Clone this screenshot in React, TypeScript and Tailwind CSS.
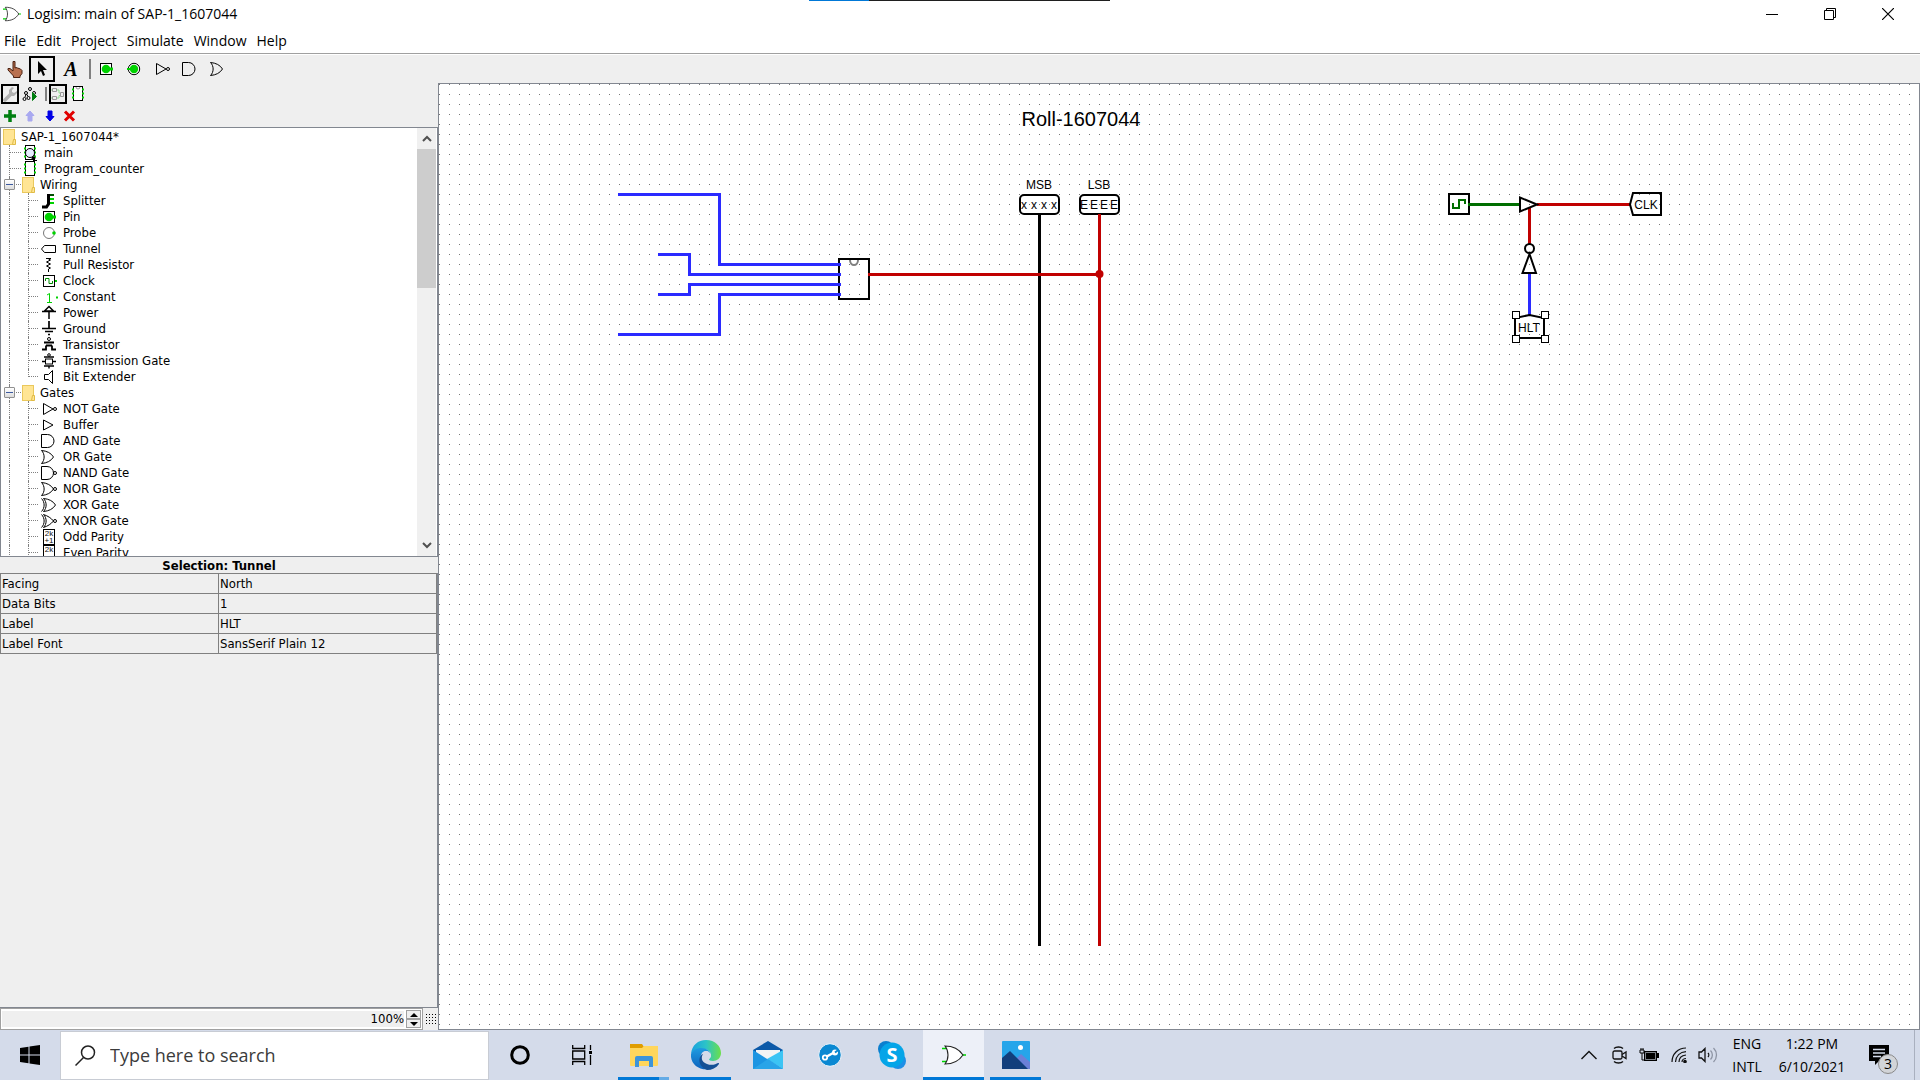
import React from 'react';

const GREEN = '#00d200';
const RED = '#c00000';
const BLUE = '#2a2aff';

function Icon({ children }: { children: React.ReactNode }) {
  return (
    <svg className="h-4 w-4 shrink-0 overflow-visible" viewBox="0 0 16 16" fill="none" stroke="#000" strokeWidth="1" aria-hidden="true">
      {children}
    </svg>
  );
}

function Folder() {
  return (
    <Icon>
      <rect x="0.5" y="0.5" width="11" height="15" fill="#ffe594" stroke="#eac85c" />
      <path d="M10.5 10.5h2v5h-3z" fill="#ffe594" stroke="#e0bb45" />
    </Icon>
  );
}

const chip = (
  <g>
    <rect x="3.5" y="0.5" width="9" height="14" fill="#fff" />
    <path d="M2 3.5h2M2 7.5h2M2 11.5h2M12 3.5h2M12 7.5h2M12 11.5h2" stroke={GREEN} strokeWidth="2" />
  </g>
);
const shield = 'M0.5 1.5C4 5 4 11 0.5 14.5C6 14 10 12 12.5 8C10 4 6 2 0.5 1.5Z';
const parityBox = (
  <g>
    <rect x="2.5" y="0.5" width="11" height="15" />
    <text x="8" y="7" textAnchor="middle" fontSize="8" fontFamily="Liberation Sans" fill="#111" stroke="none">2k</text>
  </g>
);

const glyphs: Record<string, React.ReactNode> = {
  main: (
    <g>
      {chip}
      <path d="M10 12l3 2" strokeWidth="3" />
      <path d="M11 15.5h4" />
      <circle cx="8" cy="8" r="4.5" fill="#e8ecff" />
    </g>
  ),
  circuit: chip,
  Splitter: (
    <g>
      <path d="M7.5 1v10l-2 3H1" strokeWidth="3" />
      <path d="M9 2h4" stroke="#005000" strokeWidth="2" />
      <path d="M9 6h4M9 10h4" stroke={GREEN} strokeWidth="2" />
    </g>
  ),
  Pin: (
    <g>
      <rect x="2.5" y="2.5" width="11" height="11" fill="#fff" />
      <circle cx="8" cy="8" r="4.3" fill={GREEN} stroke="none" />
      <path d="M11 8h4" stroke={GREEN} strokeWidth="3" />
    </g>
  ),
  OutPin: (
    <g>
      <circle cx="8" cy="8" r="5.7" fill="#fff" />
      <circle cx="8" cy="8" r="4.2" fill={GREEN} stroke="none" />
      <path d="M1 8h3" stroke={GREEN} strokeWidth="2" />
    </g>
  ),
  Probe: (
    <g>
      <circle cx="8" cy="8" r="5.5" stroke="#777" />
      <circle cx="13" cy="8" r="1.8" fill={GREEN} stroke="none" />
    </g>
  ),
  Tunnel: <path d="M0.5 8L3.5 4.5H14.5V11.5H3.5Z" />,
  'Pull Resistor': <path d="M5 1.5h5M7.5 1v1l2 1-4 2 4 2-4 2 4 2-2 1v3" />,
  Clock: (
    <g>
      <rect x="2.5" y="2.5" width="11" height="11" />
      <path d="M4.5 8V5.5h3.5V10.5h3.5V8" stroke="#008c00" />
      <path d="M14 8h2" stroke={GREEN} strokeWidth="2" />
    </g>
  ),
  Constant: (
    <g>
      <path d="M6 6l2.5-1.5v9M6 13.5h5" stroke={GREEN} />
      <path d="M15 8.5h2" stroke={GREEN} strokeWidth="2" />
    </g>
  ),
  Power: <path d="M8 1.5L3.5 6h9ZM1 6.5h14M8 6v8" strokeWidth="1.5" />,
  Ground: <path d="M8 0v7M1 7.5h14M4 10.5h8M7 13.5h2" strokeWidth="1.7" />,
  Transistor: (
    <g>
      <circle cx="8" cy="2" r="1.5" />
      <path d="M3 5.5h10M5 8.5h6M1 12.5h4v-4M15 12.5h-4v-4" strokeWidth="1.8" />
    </g>
  ),
  'Transmission Gate': (
    <g>
      <circle cx="8" cy="2" r="1.3" />
      <rect x="4.5" y="6" width="7" height="5" />
      <path d="M3 4h10M3 13h10M1 8.5h3M12 8.5h3M8 13v2.5" strokeWidth="1.4" />
    </g>
  ),
  'Bit Extender': <path d="M3.5 5.5h4l4-4V14.5l-4-4h-4Z" />,
  'NOT Gate': (
    <g>
      <path d="M2.5 2.5L12 8L2.5 13.5Z" />
      <circle cx="14" cy="8" r="1.5" />
    </g>
  ),
  Buffer: <path d="M2.5 3L12 8L2.5 13Z" />,
  'AND Gate': <path d="M0.5 1.5H6.5A6.5 6.5 0 0 1 6.5 14.5H0.5Z" />,
  'OR Gate': <path d={shield} />,
  'NAND Gate': (
    <g>
      <path d="M0.5 1.5H6A6.5 6.5 0 0 1 6 14.5H0.5Z" />
      <circle cx="14" cy="8" r="1.5" />
    </g>
  ),
  'NOR Gate': (
    <g>
      <path d={shield} />
      <circle cx="14" cy="8" r="1.5" />
    </g>
  ),
  'XOR Gate': (
    <g>
      <path d="M0.5 1.5C4 5 4 11 0.5 14.5" />
      <path d={shield} transform="translate(2 0)" />
    </g>
  ),
  'XNOR Gate': (
    <g>
      <path d="M0.5 1.5C4 5 4 11 0.5 14.5" />
      <path d="M2.5 1.5C6 5 6 11 2.5 14.5C7 13 10 11 12.5 8C10 5 7 3 2.5 1.5Z" />
      <circle cx="14" cy="8" r="1.5" />
    </g>
  ),
  'Odd Parity': (
    <g>
      {parityBox}
      <text x="8" y="14" textAnchor="middle" fontSize="8" fontFamily="Liberation Sans" fill="#111" stroke="none">+1</text>
    </g>
  ),
  'Even Parity': parityBox,
};

const wiring = ['Splitter', 'Pin', 'Probe', 'Tunnel', 'Pull Resistor', 'Clock', 'Constant', 'Power', 'Ground', 'Transistor', 'Transmission Gate', 'Bit Extender'];
const gates = ['NOT Gate', 'Buffer', 'AND Gate', 'OR Gate', 'NAND Gate', 'NOR Gate', 'XOR Gate', 'XNOR Gate', 'Odd Parity', 'Even Parity'];

function Branch({ wide, last }: { wide?: boolean; last?: boolean }) {
  return (
    <span className="flex h-4 w-[13px] shrink-0 flex-col">
      <span className={last ? 'h-2 border-l border-dotted border-[#808080]' : 'h-4 border-l border-dotted border-[#808080]'}>
        <span className={wide ? 'mt-[7px] block w-[11px] border-t border-dotted border-[#808080]' : 'mt-[7px] block w-[9px] border-t border-dotted border-[#808080]'} />
      </span>
    </span>
  );
}

function CircuitRow({ name, icon }: { name: string; icon: string }) {
  return (
    <li className="flex h-4 items-center pl-2">
      <Branch wide />
      <Icon>{glyphs[icon]}</Icon>
      <span className="ml-1.5">{name}</span>
    </li>
  );
}

function Library({ name, items, closed }: { name: string; items: string[]; closed: boolean }) {
  return (
    <li>
      <div className="relative flex h-4 items-center pl-2">
        <Branch wide />
        <button
          aria-label={`Collapse ${name}`}
          className="absolute top-0.5 left-[3px] flex h-[11px] w-[11px] items-center justify-center rounded-[1px] border border-[#919191] bg-linear-to-b from-white to-[#dcdcdc]"
        >
          <span className="h-px w-[7px] bg-[#3c5aa0]" />
        </button>
        <Folder />
        <span className="ml-0.5">{name}</span>
      </div>
      <ul>
        {items.map((item, i) => (
          <li key={item} className="flex h-4 items-center pl-2">
            <span className="h-4 w-[19px] shrink-0 border-l border-dotted border-[#808080]" />
            <Branch last={closed && i === items.length - 1} />
            <Icon>{glyphs[item]}</Icon>
            <span className="ml-1.5">{item}</span>
          </li>
        ))}
      </ul>
    </li>
  );
}

function OrLogo({ className }: { className: string }) {
  return (
    <svg className={className} viewBox="0 0 24 20" fill="none" aria-hidden="true">
      <path d="M0 3.5h5M0 16.5h5M20 10h4" stroke={GREEN} strokeWidth="1.5" />
      <path d="M3 1C7 6 7 14 3 19C12 19 17 16 21 10C17 4 12 1 3 1Z" fill="#fff" stroke="#222" strokeWidth="1.1" />
    </svg>
  );
}

function TitleBar() {
  return (
    <header className="relative bg-white font-['Open_Sans','Noto_Sans',sans-serif] text-[14px]">
      <div aria-hidden="true" className="absolute top-0 left-[809px] flex h-px w-[301px] bg-[#1f1f1f]">
        <span className="h-px w-[60px] bg-[#0078d7]" />
      </div>
      <div className="flex h-7 items-center">
        <OrLogo className="ml-[3px] h-4 w-[18px]" />
        <h1 className="ml-1.5 leading-5">Logisim: main of SAP-1_1607044</h1>
        <div className="ml-auto flex">
          <button aria-label="Minimize" className="flex h-7 w-[58px] items-center justify-center">
            <span className="h-px w-3 bg-black" />
          </button>
          <button aria-label="Restore" className="flex h-7 w-[58px] items-center justify-center">
            <svg className="h-3 w-3" viewBox="0 0 12 12" fill="none" stroke="#000">
              <path d="M0.5 2.5h9v9h-9zM2.5 2.5v-2h9v9h-2" />
            </svg>
          </button>
          <button aria-label="Close" className="mr-[3px] flex h-7 w-[58px] items-center justify-center">
            <svg className="h-3 w-3" viewBox="0 0 12 12" fill="none" stroke="#000" strokeWidth="1.2">
              <path d="M0 0l12 12M12 0L0 12" />
            </svg>
          </button>
        </div>
      </div>
      <nav className="flex h-[26px] items-center gap-2.5 border-b border-[#a0a0a0] pl-1">
        {['File', 'Edit', 'Project', 'Simulate', 'Window', 'Help'].map((m) => (
          <button key={m} className="leading-5">{m}</button>
        ))}
      </nav>
    </header>
  );
}

function Tool({ label, children }: { label: string; children: React.ReactNode }) {
  return (
    <button aria-label={label} className="flex h-[26px] w-7 items-center justify-center">
      {children}
    </button>
  );
}

function Toolbar() {
  return (
    <div className="flex h-[29px] items-center border-t border-white bg-[#efefef] pl-px">
      <Tool label="Poke">
        <svg className="h-[18px] w-4" viewBox="0 0 16 18" aria-hidden="true">
          <path d="M6 1.5h2V8l1-.5 1.500.5 1.500.5 1.500.5 1.500 1.500v3L13 16v1.500H6.500V16L1 10V8.500h2L6 11Z" fill="#b9704f" stroke="#4a2010" />
        </svg>
      </Tool>
      <button aria-label="Edit selection" aria-pressed="true" className="flex h-[26px] w-[26px] items-center justify-center border-2 border-black">
        <svg className="h-4 w-3" viewBox="0 0 12 16" aria-hidden="true">
          <path d="M2 0v13l3-3 2 5 2-1-2-5h4Z" fill="#000" />
        </svg>
      </button>
      <button aria-label="Text" className="ml-[3px] flex h-[26px] w-[26px] items-center justify-center font-['Liberation_Serif',serif] text-[20px] leading-5 font-bold italic">
        A
      </button>
      <span className="mr-px ml-[5px] h-5 w-0.5 bg-[#808080]" />
      <div className="flex">
        <Tool label="Input pin"><Icon>{glyphs.Pin}</Icon></Tool>
        <Tool label="Output pin"><Icon>{glyphs.OutPin}</Icon></Tool>
        <Tool label="NOT gate"><Icon>{glyphs['NOT Gate']}</Icon></Tool>
        <Tool label="AND gate"><Icon>{glyphs['AND Gate']}</Icon></Tool>
        <Tool label="OR gate"><Icon>{glyphs['OR Gate']}</Icon></Tool>
      </div>
    </div>
  );
}

function ExplorerTools() {
  return (
    <div className="flex h-11 flex-col pl-px">
      <div className="flex h-[21px] items-center">
        <button aria-label="Toolbox" aria-pressed="true" className="flex h-5 w-[18px] items-center justify-center border-2 border-black">
          <svg className="h-4 w-[14px]" viewBox="0 0 14 16" aria-hidden="true">
            <path d="M2 14L8 8" stroke="#b0b0b0" strokeWidth="3.5" strokeLinecap="round" />
            <path d="M9 1L6 4v4l2 2h3l3-3V5l-3 2-2-1V4l2-2Z" fill="#b0b0b0" />
          </svg>
        </button>
        <button aria-label="Simulation tree" className="ml-[3px] flex h-5 w-4 items-center justify-center">
          <svg className="h-4 w-4" viewBox="0 0 16 16" fill="none" stroke="#000" aria-hidden="true">
            <circle cx="8" cy="3" r="1.500" />
            <circle cx="4" cy="7" r="1.500" />
            <circle cx="12" cy="7" r="1.500" />
            <circle cx="2.500" cy="13" r="1.500" />
            <circle cx="6.500" cy="12" r="1.500" />
            <path d="M4 8.500L3 11M5 8.500l1 2" />
            <path d="M10.500 6.500v8l4-4Z" fill="#007f10" stroke="#007f10" />
          </svg>
        </button>
        <span className="ml-[7px] h-3.5 w-0.5 bg-[#808080]" />
        <button aria-label="Edit circuit layout" aria-pressed="true" className="ml-0.5 flex h-5 w-[18px] items-center justify-center border-2 border-black">
          <svg className="h-4 w-[14px]" viewBox="0 0 14 16" fill="none" stroke="#999" aria-hidden="true">
            <path d="M1.5 2.5h4v3h-4zM1.5 10.5h4v3h-4zM9.5 6.5h3v4h-3z" />
            <path d="M6 4h2v3h1M6 12h2V9.5h1M0 4h1M0 12h1" stroke="#8fdc8f" />
          </svg>
        </button>
        <button aria-label="Edit circuit appearance" className="ml-[3px] flex h-5 w-4 items-center justify-center">
          <Icon>
            {chip}
            <path d="M6 1a2 2 0 0 0 4 0" stroke="#999" />
          </Icon>
        </button>
      </div>
      <div className="flex h-[22px] items-center gap-1 pt-px pl-px">
        <button aria-label="Add circuit">
          <Icon><path d="M8 2v12M2 8h12" stroke="#007f10" strokeWidth="3.500" /></Icon>
        </button>
        <button aria-label="Move circuit up">
          <Icon><path d="M8 3l4 4.5H10V13H6V7.5H4Z" fill="#a9a9f0" stroke="#a9a9f0" /></Icon>
        </button>
        <button aria-label="Move circuit down">
          <Icon><path d="M8 13l4-4.5H10V3H6V8.5H4Z" fill="#0000e6" stroke="#0000e6" /></Icon>
        </button>
        <button aria-label="Remove circuit">
          <Icon><path d="M3 3.5l9 9M12 3.5l-9 9" stroke="#e00000" strokeWidth="3" /></Icon>
        </button>
      </div>
    </div>
  );
}

function TreePane() {
  return (
    <div className="flex h-[430px] shrink-0 justify-between overflow-hidden border border-[#828790] bg-white pr-px">
      <ul className="pt-px whitespace-nowrap">
        <li className="flex h-4 items-center pl-0.5">
          <Folder />
          <span className="ml-0.5">SAP-1_1607044*</span>
        </li>
        <CircuitRow name="main" icon="main" />
        <CircuitRow name="Program_counter" icon="circuit" />
        <Library name="Wiring" items={wiring} closed />
        <Library name="Gates" items={gates} closed={false} />
      </ul>
      <div className="flex w-[19px] flex-col bg-[#f0f0f0]">
        <button aria-label="Scroll up" className="flex h-[21px] items-center justify-center">
          <svg className="h-2 w-2.5" viewBox="0 0 10 8" fill="none" stroke="#505050" strokeWidth="2"><path d="M1 6l4-4 4 4" /></svg>
        </button>
        <div className="h-[139px] bg-[#cdcdcd]" />
        <button aria-label="Scroll down" className="mt-auto flex h-[21px] items-center justify-center">
          <svg className="h-2 w-2.5" viewBox="0 0 10 8" fill="none" stroke="#505050" strokeWidth="2"><path d="M1 1l4 4 4-4" /></svg>
        </button>
      </div>
    </div>
  );
}

const attributes = [
  ['Facing', 'North'],
  ['Data Bits', '1'],
  ['Label', 'HLT'],
  ['Label Font', 'SansSerif Plain 12'],
];

function AttributePane() {
  return (
    <section className="flex min-h-0 flex-1 flex-col">
      <h2 className="h-4 text-center leading-[18px] font-bold">Selection: Tunnel</h2>
      <div className="flex-1 border-r border-b border-[#828790]">
        <table className="w-full table-fixed border-collapse">
          <tbody>
            {attributes.map(([k, v]) => (
              <tr key={k} className="h-5">
                <th scope="row" className="border border-[#808080] px-px py-0 text-left leading-4 font-normal">{k}</th>
                <td className="border border-[#808080] px-px py-0 leading-4">{v}</td>
              </tr>
            ))}
          </tbody>
        </table>
      </div>
      <div className="flex h-[22px] items-center">
        <div className="flex h-[22px] flex-1 items-center border border-[#a0a0a0] bg-white p-px">
          <input aria-label="Zoom" defaultValue="100%" className="h-4 min-w-0 flex-1 bg-[#efefef] text-right" />
          <div className="ml-0.5 flex flex-col">
            <button aria-label="Zoom in" className="flex h-[9px] w-[15px] items-center justify-center border border-[#a0a0a0] bg-[#efefef]">
              <svg className="h-1 w-2" viewBox="0 0 8 4"><path d="M4 0l4 4H0z" /></svg>
            </button>
            <button aria-label="Zoom out" className="flex h-[9px] w-[15px] items-center justify-center border border-[#a0a0a0] bg-[#efefef]">
              <svg className="h-1 w-2" viewBox="0 0 8 4"><path d="M4 4l4-4H0z" /></svg>
            </button>
          </div>
        </div>
        <button aria-label="Toggle grid" className="flex h-[22px] w-[15px] items-center justify-center">
          <svg className="h-3 w-3" viewBox="0 0 12 12">
            <defs>
              <pattern id="mini" width="3" height="3" patternUnits="userSpaceOnUse"><rect width="1" height="1" x="1" y="1" /></pattern>
            </defs>
            <rect width="12" height="12" fill="url(#mini)" />
          </svg>
        </button>
      </div>
    </section>
  );
}

function Circuit() {
  return (
    <main className="min-w-0 flex-1 overflow-hidden border border-[#828790] bg-white">
      <svg className="block h-full w-full" aria-label="main circuit" fontFamily="Liberation Sans, sans-serif" fontSize="12">
        <defs>
          <pattern id="grid" width="10" height="10" patternUnits="userSpaceOnUse">
            <rect x="9" y="4" width="1" height="1" fill="#777" />
          </pattern>
        </defs>
        <g transform="translate(-439 -84)" fill="none">
          <rect x="430" y="80" width="4000" height="3000" fill="url(#grid)" />
          <g strokeWidth="2" stroke="#000">
            <rect x="839" y="259" width="30" height="40" />
            <path d="M850 260a4 5 0 0 0 8 0" stroke="#808080" />
            <rect x="1020" y="195" width="39" height="19" rx="4" />
            <rect x="1080" y="195" width="39" height="19" rx="4" />
            <rect x="1449" y="194" width="20" height="20" />
            <path d="M1453 203v5h6v-8h6v4" stroke="#006e00" />
          </g>
          <g strokeWidth="3" stroke={BLUE}>
            <path d="M618 194.5H719.5V264.5H841" />
            <path d="M658 254.5H689.5V274.5H841" />
            <path d="M658 294.5H689.5V284.5H841" />
            <path d="M618 334.5H719.5V294.5H841" />
            <path d="M1529.5 273V315" />
          </g>
          <path d="M1039.5 215V946" stroke="#000" strokeWidth="3" />
          <g strokeWidth="3" stroke={RED}>
            <path d="M868 274.5H1099.5M1099.5 214V946M1537 204.5H1631M1529.5 208V245" />
            <circle cx="1099.5" cy="274" r="4" fill={RED} stroke="none" />
          </g>
          <path d="M1468 204.5H1520" stroke="#006e00" strokeWidth="3" />
          <g strokeWidth="2" stroke="#000">
            <path d="M1520 197.5V211.5L1537 204.5Z" />
            <circle cx="1529.5" cy="248.5" r="4.5" fill="#fff" />
            <path d="M1529.5 254L1536 273H1522.5Z" />
            <path d="M1515 338V318L1529.5 315L1544 318V338Z" />
            <path d="M1630 204.5L1633 193H1661V215H1633Z" />
          </g>
          <g strokeWidth="1" stroke="#000" fill="#fff">
            <rect x="1512.5" y="311.5" width="7" height="7" />
            <rect x="1541.5" y="311.5" width="7" height="7" />
            <rect x="1512.5" y="335.5" width="7" height="7" />
            <rect x="1541.5" y="335.5" width="7" height="7" />
          </g>
          <g fill="#000" textAnchor="middle">
            <text x="1081" y="126" fontSize="20">Roll-1607044</text>
            <text x="1039" y="189">MSB</text>
            <text x="1099" y="189">LSB</text>
            {[1024, 1034, 1044, 1054].map((x) => (
              <text key={x} x={x} y="209">x</text>
            ))}
            {[1084, 1094, 1104, 1114].map((x) => (
              <text key={x} x={x} y="209">E</text>
            ))}
            <text x="1646" y="209">CLK</text>
            <text x="1529" y="332">HLT</text>
          </g>
        </g>
      </svg>
    </main>
  );
}

function TaskButton({ label, children, active, open, more }: { label: string; children: React.ReactNode; active?: boolean; open?: boolean; more?: boolean }) {
  return (
    <button
      aria-label={label}
      className={active ? 'relative flex h-[50px] w-[61px] items-center justify-center bg-[#edf0f8]' : 'relative flex h-[50px] w-[61px] items-center justify-center'}
    >
      {children}
      {open && (
        <span className={active ? 'absolute inset-x-0 bottom-0 flex h-[3px] bg-[#0078d7]' : 'absolute inset-x-[5px] bottom-0 flex h-[3px] justify-end bg-[#0078d7]'}>
          {more && <span className="h-[3px] w-2.5 bg-[#64abe6]" />}
        </span>
      )}
    </button>
  );
}

function Taskbar() {
  return (
    <footer className="flex h-[50px] shrink-0 items-center bg-[#d4dbea] font-['Open_Sans','Noto_Sans',sans-serif]">
      <button aria-label="Start" className="flex h-[50px] w-[60px] items-center justify-center">
        <svg className="h-5 w-5" viewBox="0 0 20 20" aria-hidden="true">
          <path d="M0 3l8.5-1.2v7.7H0zM9.5 1.6L20 0v9.5H9.5zM0 10.5h8.5v7.7L0 17zM9.5 10.5H20V20L9.5 18.4z" />
        </svg>
      </button>
      <label className="flex h-[49px] w-[429px] items-center border border-[#c8ccd4] bg-white pl-3.5">
        <svg className="h-[21px] w-[21px]" viewBox="0 0 21 21" fill="none" stroke="#222" strokeWidth="1.5" aria-hidden="true">
          <circle cx="13" cy="7.5" r="6.5" />
          <path d="M8.5 12.5L0.5 20.5" />
        </svg>
        <input aria-label="Search" placeholder="Type here to search" className="ml-3.5 min-w-0 flex-1 bg-transparent text-[18px] placeholder:text-[#3b3b3b]" />
      </label>
      <nav className="flex gap-px">
        <TaskButton label="Cortana">
          <svg className="h-5 w-5" viewBox="0 0 20 20"><circle cx="10" cy="10" r="8.300" fill="none" stroke="#000" strokeWidth="3" /></svg>
        </TaskButton>
        <TaskButton label="Task View">
          <svg className="h-5 w-5" viewBox="0 0 20 20" fill="none" stroke="#000" strokeWidth="1.3">
            <path d="M0.7 0v3.5h12V0M0.7 20v-3.5h12V20M0.7 6h12v8h-12zM18.5 0v5M18.5 10v10" />
            <path d="M17 7.5h3" strokeWidth="3" />
          </svg>
        </TaskButton>
        <TaskButton label="File Explorer" open more>
          <svg className="h-6 w-7" viewBox="0 0 28 24">
            <path d="M0 1h12l2 3-2 3H0z" fill="#e09d00" />
            <path d="M0 5h12l2-2h14v19a1 1 0 0 1-1 1H1a1 1 0 0 1-1-1z" fill="#ffd65c" />
            <path d="M5 24V15a2 2 0 0 1 2-2h14a2 2 0 0 1 2 2v9h-4v-6H9v6z" fill="#3d94d9" />
          </svg>
        </TaskButton>
        <TaskButton label="Microsoft Edge" open>
          <svg className="h-[30px] w-[30px]" viewBox="0 0 30 30">
            <defs>
              <linearGradient id="eg" x1="0" x2="1"><stop offset="0" stopColor="#1aa0e0" /><stop offset=".5" stopColor="#2cc3c8" /><stop offset="1" stopColor="#6be04a" /></linearGradient>
              <linearGradient id="eb" x1="0" y1="0" x2="0" y2="1"><stop offset="0" stopColor="#1f9be0" /><stop offset="1" stopColor="#0c62bd" /></linearGradient>
            </defs>
            <path d="M0 14C1 5 7 0 15 0c9 0 15 6 15 13 0 5-4 8-8 8-3 0-4-1-4-2 1-1 2-2 2-4 0-3-3-6-8-6C7 9 2 11 0 14z" fill="url(#eg)" />
            <path d="M0 14c2-4 6-6 10-6 6 0 9 3 10 7-1-2-3-4-5-4-4 0-6 4-5 8 1 5 5 9 9 10C8 31-1 24 0 14z" fill="url(#eb)" />
            <path d="M12 14c-2 3-2 8 4 10 5 2 9 0 11-1 1 0 1 0 1 1-3 4-7 6-12 6-6-2-9-8-7-13 1-2 2-3 3-3z" fill="#134f95" />
            <path d="M12 14c1-3 4-4 6-2 1 1 2 2 2 3 0 2-1 3-2 4-2 1-4 0-6-2z" fill="#d4dbea" />
          </svg>
        </TaskButton>
        <TaskButton label="Mail">
          <svg className="h-7 w-[30px]" viewBox="0 0 30 28">
            <path d="M0 9L15 0l15 9v5H0z" fill="#0c59a8" />
            <path d="M3 9h24v8L15 20 3 17z" fill="#f4f4f4" />
            <path d="M0 9l30 19H0z" fill="#1d95e2" />
            <path d="M30 9v19L14 18z" fill="#3cc4f4" />
            <path d="M0 28L15 18l15 10z" fill="#2aa4e8" />
          </svg>
        </TaskButton>
        <TaskButton label="Support Assistant">
          <svg className="h-6 w-6" viewBox="0 0 24 24">
            <circle cx="12" cy="12" r="11.3" fill="#0a88d2" stroke="#f2f6fb" />
            <path d="M7 14.500L16 9.500" stroke="#fff" strokeWidth="2.500" />
            <circle cx="7" cy="14.500" r="2.200" fill="#0a88d2" stroke="#fff" strokeWidth="1.800" />
            <circle cx="17" cy="9.500" r="3" fill="#fff" />
            <path d="M17 9.500l4-3" stroke="#0a88d2" strokeWidth="2" />
          </svg>
        </TaskButton>
        <TaskButton label="Skype">
          <svg className="h-7 w-7" viewBox="0 0 28 28">
            <circle cx="8" cy="8" r="8" fill="#0b7fcf" />
            <circle cx="20" cy="20" r="8" fill="#1d8fe6" />
            <circle cx="14" cy="14" r="12.5" fill="#05a5e8" />
            <text x="14" y="21" textAnchor="middle" fontSize="20" fontWeight="700" fontFamily="Open Sans" fill="#fff">S</text>
          </svg>
        </TaskButton>
        <TaskButton label="Logisim" active open>
          <OrLogo className="h-5 w-6" />
        </TaskButton>
        <TaskButton label="Photos" open>
          <svg className="h-7 w-7" viewBox="0 0 28 28">
            <rect width="28" height="28" rx="1" fill="#26a5ea" />
            <path d="M12 20l7-7 9 8v7H16z" fill="#6b80d8" />
            <path d="M0 17l8-7 18 18H0z" fill="#123f7c" />
            <circle cx="18.5" cy="6.5" r="2.5" fill="#fff" />
          </svg>
        </TaskButton>
      </nav>
      <div className="ml-auto flex items-center text-[14px]">
        <button aria-label="Show hidden icons" className="flex w-8 justify-center">
          <svg className="h-3 w-4" viewBox="0 0 16 12" fill="none" stroke="#111" strokeWidth="1.4"><path d="M0.5 10L8 2.5l7.5 7.5" /></svg>
        </button>
        <button aria-label="Meet Now" className="flex w-[29px] justify-center">
          <svg className="h-[18px] w-[15px]" viewBox="0 0 15 18" fill="none" stroke="#111" strokeWidth="1.3">
            <rect x="1" y="5" width="9" height="8" rx="1.5" />
            <path d="M10 8.5l4-2.5v6.5l-4-2.5M2 2.5C4 .5 9 .5 11 2.5M2 15.5c2 2 7 2 9 0" />
          </svg>
        </button>
        <button aria-label="Battery" className="flex w-[30px] justify-center">
          <svg className="h-[14px] w-5" viewBox="0 0 20 14">
            <path d="M1 2v3h4V2zM2 0v2M4 0v2M3 5v7h2" fill="none" stroke="#000" />
            <path d="M5 3h13v2h2v5h-2v3H5z" />
            <path d="M6.500 4.500h10v7h-10z" fill="none" stroke="#d4dbea" strokeWidth=".6" />
          </svg>
        </button>
        <button aria-label="Network" className="flex w-[30px] justify-center">
          <svg className="h-4 w-4" viewBox="0 0 16 16" fill="none" stroke="#111" strokeWidth="1.2">
            <path d="M1 15C1 7 7 1 15 1M4.5 15C5 9 9 5 15 4.7M8 15c0-4 3-6.5 7-7M11 15c0-2 2-3.5 4-3.5" />
            <circle cx="14" cy="14.5" r="1.2" fill="#111" />
          </svg>
        </button>
        <button aria-label="Volume" className="flex w-[28px] justify-center">
          <svg className="h-4 w-5" viewBox="0 0 20 16" fill="none" stroke="#111" strokeWidth="1.3">
            <path d="M1 5h2.5L7 1.5v13L3.5 11H1zM10 6c1 1 1 3 0 4" />
            <path d="M12.5 3.5c2.5 2.5 2.5 6.5 0 9M15.5 1c4 4 4 10 0 14" stroke="#8d94a3" />
          </svg>
        </button>
        <button aria-label="Input language" className="flex w-[50px] flex-col items-center leading-[23px]">
          <span>ENG</span>
          <span>INTL</span>
        </button>
        <button aria-label="Clock" className="flex w-20 flex-col items-center leading-[23px] whitespace-nowrap">
          <span>1:22 PM</span>
          <span>6/10/2021</span>
        </button>
        <button aria-label="Notifications" className="relative mr-2 flex h-[50px] w-[54px] items-center justify-center">
          <svg className="h-5 w-5" viewBox="0 0 20 20">
            <path d="M0 0h20v16H10l-4 4v-4H0z" />
            <path d="M4 4.5h12M4 8h12M4 11.5h8" stroke="#d4dbea" strokeWidth="1.3" />
          </svg>
          <span className="absolute top-6 left-[26px] flex h-5 w-5 items-center justify-center rounded-full border border-[#888] bg-[#d2d4d8] text-[14px] leading-4">3</span>
        </button>
        <span className="h-[50px] w-1.5 border-l border-[#a9b0bf]" />
      </div>
    </footer>
  );
}

export default function App() {
  return (
    <div className="flex h-screen flex-col overflow-hidden bg-[#efefef] text-black">
      <TitleBar />
      <Toolbar />
      <div className="flex min-h-0 flex-1">
        <aside className="flex w-[438px] shrink-0 flex-col font-['DejaVu_Sans_Condensed','DejaVu_Sans',sans-serif] text-[13px] leading-4">
          <ExplorerTools />
          <TreePane />
          <AttributePane />
        </aside>
        <Circuit />
      </div>
      <Taskbar />
    </div>
  );
}
